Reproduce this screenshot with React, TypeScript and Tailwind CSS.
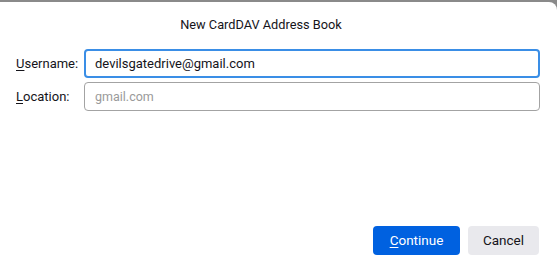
export default function App() {
  return (
    <div className="h-[262px] w-[557px] bg-[#8a8a8a] pt-[2px] font-['Roboto',sans-serif] text-[13px] text-[#15141a]">
      <div className="flex h-[260px] flex-col rounded-tr-[8px] bg-white">
        <h1 className="pr-[35px] pt-[13px] text-center text-[12.75px] leading-[20px]">New CardDAV Address Book</h1>
        <div className="mt-[14px] grid grid-cols-[68px_1fr] gap-y-[4px] pl-[16px] pr-[17px]">
          <label className="flex items-center leading-[18px]">
            <span className="underline underline-offset-2">U</span>sername:
          </label>
          <input
            readOnly
            value="devilsgatedrive@gmail.com"
            className="h-[29px] rounded-[4px] border-2 border-[#3a8ee6] px-[9px] text-[13px] outline-none"
          />
          <label className="flex items-center leading-[18px]">
            <span className="underline underline-offset-2">L</span>ocation:
          </label>
          <input
            readOnly
            placeholder="gmail.com"
            className="h-[29px] rounded-[4px] border border-[#a3a3a3] px-[10px] text-[12.5px] outline-none placeholder:text-[#9a9a9a]"
          />
        </div>
        <div className="mt-auto flex justify-end gap-[8px] pb-[7px] pr-[18px]">
          <button className="h-[29px] w-[87px] rounded-[4px] bg-[#0061e0] text-[13.5px] text-white">
            <span className="underline underline-offset-2">C</span>ontinue
          </button>
          <button className="h-[29px] w-[71px] rounded-[4px] bg-[#e9e9ed] text-[13.5px]">Cancel</button>
        </div>
      </div>
    </div>
  );
}
